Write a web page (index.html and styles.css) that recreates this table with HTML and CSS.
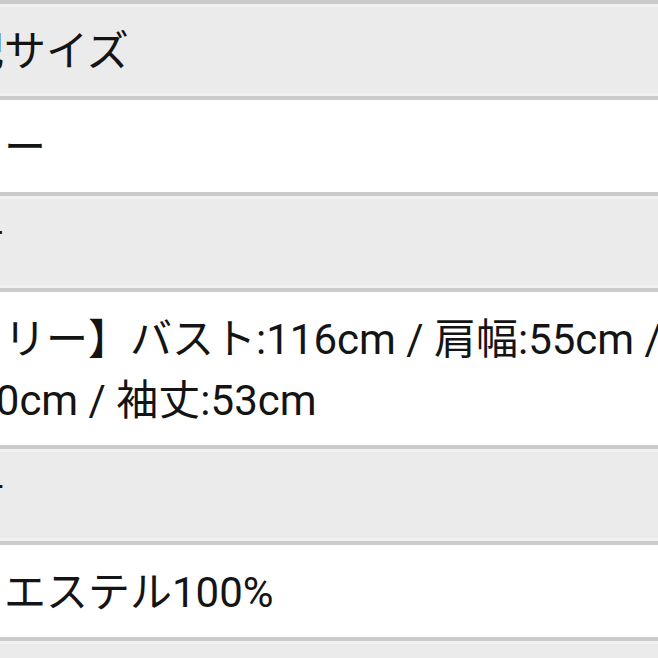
FILE: index.html
```html
<!DOCTYPE html>
<html lang="ja">
<head>
<meta charset="utf-8">
<link rel="stylesheet" href="styles.css">
</head>
<body>
<div class="spec">
  <div class="row head"><div class="cell">表記サイズ</div></div>
  <div class="row"><div class="cell">フリー</div></div>
  <div class="row head"><div class="cell">採寸</div></div>
  <div class="row"><div class="cell">【フリー】バスト:116cm / 肩幅:55cm / 着<br>丈:70cm / 袖丈:53cm</div></div>
  <div class="row head"><div class="cell">素材</div></div>
  <div class="row"><div class="cell">ポリエステル100%</div></div>
  <div class="row head"><div class="cell">カラー</div></div>
</div>
</body>
</html>
```
FILE: styles.css
```css
html, body {
  margin: 0;
  padding: 0;
  background: #ffffff;
  overflow: hidden;
}
.spec {
  width: 900px;
  margin-left: -80px;
  border-top: 4px solid #cbcbcb;
  font-family: Roboto, "Noto Sans CJK JP", sans-serif;
  font-size: 42px;
  line-height: 61px;
  color: #141414;
}
.row {
  border-bottom: 4px solid #cbcbcb;
  background: #ffffff;
}
.row.head {
  background: #ebebeb;
  box-shadow: inset 0 3px 0 #f1f1f1, inset 0 -3px 0 #f1f1f1;
}
.cell {
  padding: 17px 0 14px 0;
  white-space: nowrap;
}
```
